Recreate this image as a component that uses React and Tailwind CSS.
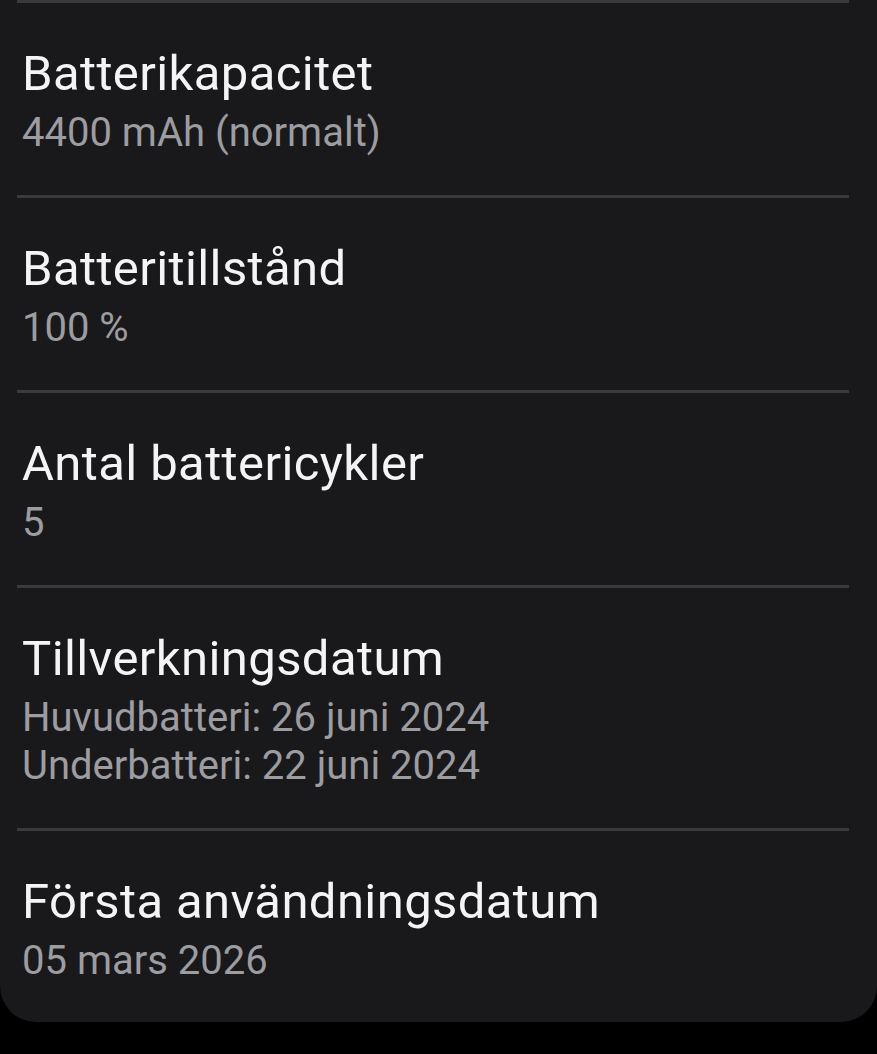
const rows = [
  { title: 'Batterikapacitet', lines: ['4400 mAh (normalt)'] },
  { title: 'Batteritillstånd', lines: ['100 %'] },
  { title: 'Antal battericykler', lines: ['5'] },
  { title: 'Tillverkningsdatum', lines: ['Huvudbatteri: 26 juni 2024', 'Underbatteri: 22 juni 2024'] },
  { title: 'Första användningsdatum', lines: ['05 mars 2026'] },
]

const Divider = () => <div className="ml-[17px] mr-[28px] h-[3px] bg-[#3a3a3c]" />

export default function App() {
  return (
    <div className="min-h-[1054px] bg-black font-['Roboto',sans-serif]">
      <div className="bg-[#19191b] rounded-b-[36px]">
        {rows.map((row, i) => (
          <div key={row.title}>
            <Divider />
            <div className={`px-[22px] pt-[44px] ${i === rows.length - 1 ? 'pb-[37px]' : 'pb-[38px]'}`}>
              <div className="text-[49px] leading-[54px] text-[#f4f4f6] tracking-[0.4px]">{row.title}</div>
              <div className="mt-[8px]">
                {row.lines.map(line => (
                  <div key={line} className="text-[40px] leading-[48px] text-[#9c9ca1]">{line}</div>
                ))}
              </div>
            </div>
          </div>
        ))}
      </div>
    </div>
  )
}
